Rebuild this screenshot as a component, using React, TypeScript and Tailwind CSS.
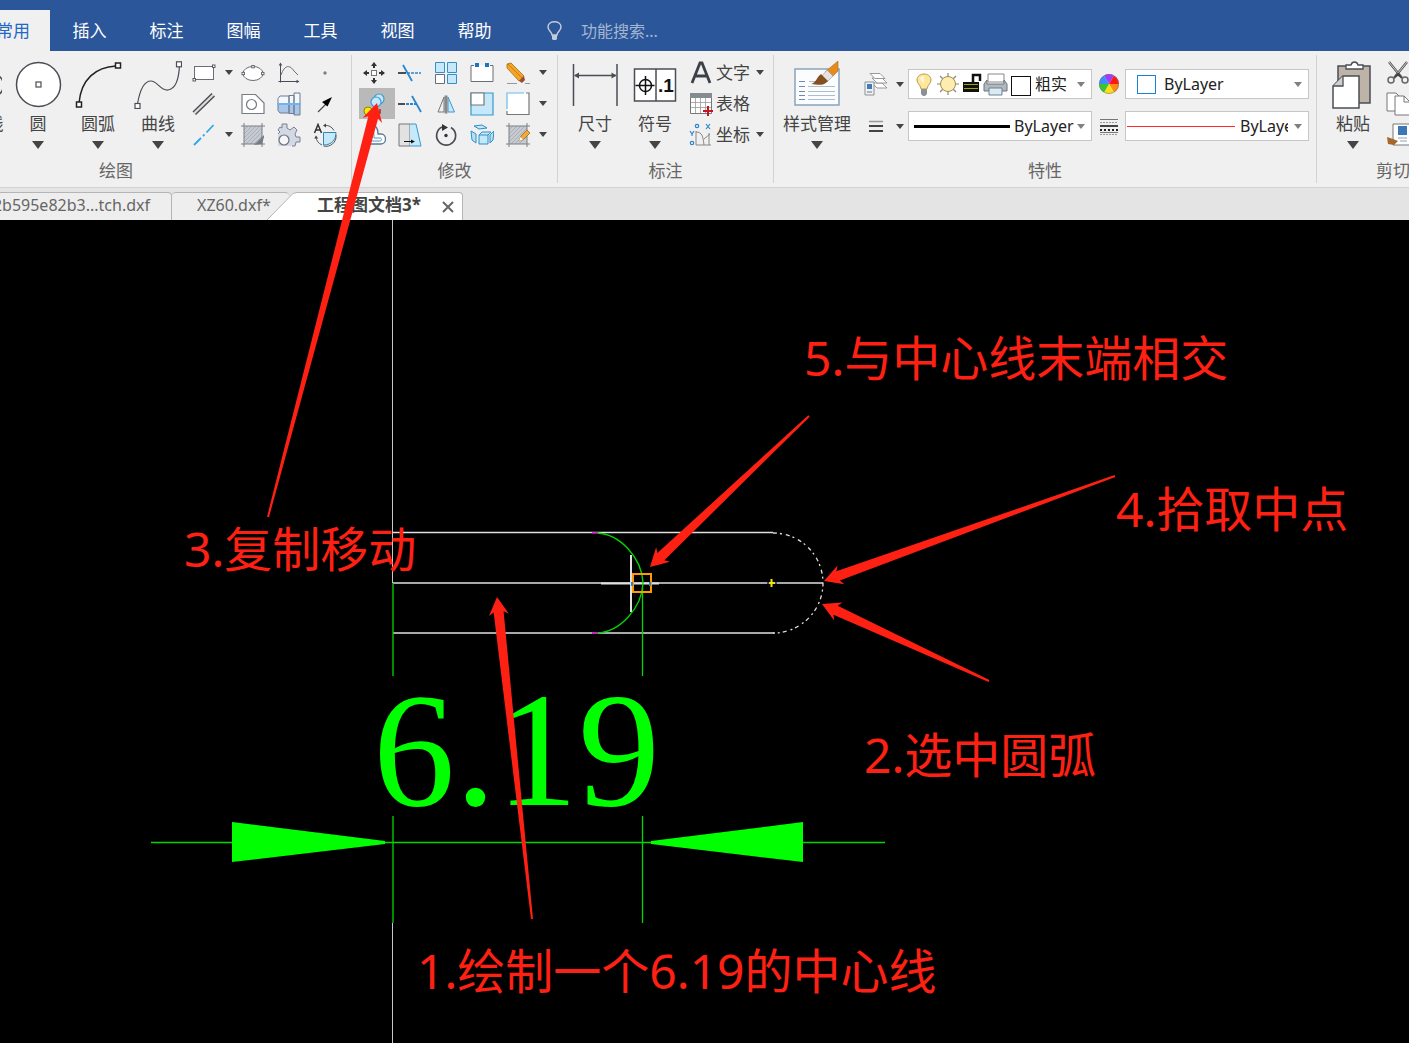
import type { ReactNode } from 'react';

const INK = '#4a4d54';
const BLUE = '#2a86cf';
const PALE = '#c5e8fb';

function Icon({ children, size = 24 }: { children: ReactNode; size?: number }) {
  return (
    <svg width={size} height={size} viewBox={`0 0 ${size} ${size}`} fill="none" className="shrink-0" aria-hidden="true">
      {children}
    </svg>
  );
}

function Caret({ large = false, light = false }: { large?: boolean; light?: boolean }) {
  return (
    <svg
      width={large ? 12 : 8}
      height={large ? 8 : 5}
      viewBox="0 0 12 8"
      preserveAspectRatio="none"
      className="shrink-0"
      aria-hidden="true"
    >
      <path d="M0 0H12L6 8Z" fill={light ? '#808080' : '#444'} />
    </svg>
  );
}

/* ---------- drawing tools ---------- */

const rectangle = (
  <>
    <rect x="2.500" y="5.500" width="19" height="13" fill="#fff" stroke="#6a6d74" />
    <rect x="20.500" y="4" width="2.500" height="2.500" fill="#fff" stroke={INK} strokeWidth=".9" />
    <rect x="1" y="17.500" width="2.500" height="2.500" fill="#fff" stroke={INK} strokeWidth=".9" />
  </>
);
const ellipse = (
  <>
    <ellipse cx="12" cy="12.500" rx="10" ry="7" fill="#fff" stroke="#6a6d74" />
    <g fill="#fff" stroke={INK} strokeWidth=".8">
      <rect x="10.800" y="4.500" width="2.400" height="2.400" />
      <rect x="1" y="11.300" width="2.400" height="2.400" />
      <rect x="20.600" y="11.300" width="2.400" height="2.400" />
    </g>
  </>
);
const plot = (
  <>
    <path d="M3.500 3v18.500M1.500 20.500H21" stroke={INK} />
    <path d="M3.500 1.500l-1.800 3h3.600zM22.500 20.500l-3-1.800v3.600z" fill={INK} />
    <path d="M4 14C8 3 13 4 17 10l4 4" stroke="#6a6d74" />
  </>
);
const point = <circle cx="12" cy="12" r="1.700" fill="#808080" />;
const parallel = (
  <>
    <path d="M2 21.500L21.500 2.500" stroke="#dcdcdc" strokeWidth="3" />
    <path d="M1 20L20 1.500M3.500 22.500L22.500 4" stroke={INK} strokeWidth="1.400" />
  </>
);
const outline = (
  <>
    <path d="M1 2.500h13.500L23 11v10.500H1z" fill="#fff" stroke="#777b82" strokeWidth="1.200" />
    <circle cx="10.500" cy="12.500" r="5" stroke="#777b82" strokeWidth="1.200" />
  </>
);
const shaft = (
  <>
    <path d="M1 6.500L3 4h9v17H3l-2-2.500z" fill="#f4f8fc" />
    <path d="M12 3.500h5v18h-5zM17 1h6v22h-6z" fill="#f4f8fc" />
    <path d="M1 13h11v8H3l-2-2.500zM12 13h5v8.500h-5zM17 13h6v10h-6z" fill="#a9c6e8" />
    <path d="M1 6.500L3 4h9v17H3l-2-2.500zM12 3.500h5v18h-5zM17 1h6v22h-6z" stroke="#6d7d92" />
    <path d="M0 12h24" stroke="#6db4f0" strokeWidth="2" />
  </>
);
const leader = (
  <>
    <path d="M5 20L15 10" stroke={INK} strokeWidth="1.200" />
    <path d="M19 5l-10 5 5.500 4.500z" fill="#000" />
  </>
);
const centerline = (
  <path d="M2 22L9 15m2-2l1.500-1.500M14.500 9.500L21.500 2" stroke="#2fa8e6" strokeWidth="1.800" />
);
const hatch = (
  <>
    <rect x="3" y="3" width="18" height="18" fill="#c6cad1" />
    <path
      d="M3 7l4-4M3 11l8-8M3 15l12-12M3 19l16-16M5 21L21 5M9 21L21 9M13 21l8-8"
      stroke="#a2a8b2"
      strokeWidth=".8"
    />
    <path d="M3 0v24M21 0v24M0 3h24M0 21h24" stroke="#7a7f87" />
  </>
);
const hatchCorner = (
  <>
    {hatch}
    <path d="M13 22L23 12v2l-2 7z" fill="#777c84" />
  </>
);
const gear = (
  <>
    <path
      d="M5 5V1h5v4l3 2 4-3 3 3-2 4 1 3h4v5h-4l-1 4H1V12l2-2-2-3 2-2z"
      fill="#d3d9e4"
    />
    <path
      d="M1 11l2-2-2-2 2-3 2 1V1h5v4l3 2 4-3 3 3-2 4 1 3h4v5h-4l-1 4h-3"
      stroke="#7b818c"
    />
    <circle cx="7" cy="17" r="5" fill="#f6f6f6" stroke="#6b717c" strokeWidth="1.200" />
  </>
);
const region = (
  <>
    <path d="M10.500 9.500H23c0 7-4 12.500-12.500 12.500z" fill={PALE} stroke="#3188b5" />
    <path d="M11 2.500a10 10 0 0 1 10 5M3 14a10 10 0 0 0 6 8M10.500 23a10 10 0 0 0 12.500-11" stroke="#555b63" />
    <path d="M10 2.500l3-2v4zM3 12.500l-1.800 3h4z" fill="#444" />
    <path d="M1.500 10L5 1.500 8.500 10M3 7h4" stroke="#333" strokeWidth="1.500" />
  </>
);

/* ---------- modify tools ---------- */

const move = (
  <>
    <rect x="9.500" y="9.500" width="5" height="5" fill="#fff" stroke="#777" />
    <path d="M12 2v5M12 17v5M2 12h5M17 12h5" stroke="#333" strokeWidth="2" />
    <path d="M12 1L9 5h6zM12 23l-3-4h6zM1 12l4-3v6zM23 12l-4-3v6z" fill="#333" />
  </>
);
const trim = (
  <>
    <path d="M0 12h8" stroke={INK} strokeWidth="2" />
    <path d="M9 12h14" stroke={BLUE} strokeWidth="1.600" strokeDasharray="3 1" />
    <path d="M5 4l9 16" stroke={BLUE} strokeWidth="1.800" />
  </>
);
const arrayTool = (
  <>
    <g fill={PALE} stroke="#3790c4">
      <path d="M1.500 1.500h9v10h-9zM13.500 1.500h9v10h-9zM13.500 13.500h9v9h-9z" />
    </g>
    <path d="M1.500 13.500h9v9h-9z" fill="#fff" stroke="#6a6d74" />
  </>
);
const breakTool = (
  <>
    <path d="M1 4.500h22v16H1z" fill="#fff" />
    <path d="M4 4.500H1v16h22v-16h-3" stroke="#6a6d74" />
    <path d="M5 2h4v4H5zM15 2h4v4h-4z" fill="#1976c2" />
  </>
);
const eraser = (
  <>
    <path d="M1 3l4-1 13 13-5 5L1 7z" fill="#f3a526" stroke="#a96918" strokeWidth=".8" />
    <path d="M2 3l14 14" stroke="#c97c10" />
    <path d="M13 20l5-5 1 4-3 3z" fill="#9c4b35" />
    <path d="M1 22.500h10M19 22.500h5" stroke="#999" />
  </>
);
const copyMove = (
  <>
    <circle cx="17" cy="7" r="5" fill={PALE} stroke="#479bce" strokeWidth="1.200" />
    <circle cx="14" cy="10" r="5" fill={PALE} stroke="#479bce" strokeWidth="1.200" />
    <circle cx="6" cy="19" r="4" fill="#ffeb00" stroke="#8a8a00" />
    <path d="M13 21h5v-4" stroke="#a22" strokeWidth="1.500" />
  </>
);
const extend = (
  <>
    <path d="M0 12h7" stroke={INK} strokeWidth="2" />
    <path d="M8 12h10" stroke={BLUE} strokeWidth="1.800" strokeDasharray="3 1" />
    <path d="M14 4l9 16" stroke={BLUE} strokeWidth="1.800" />
  </>
);
const mirror = (
  <>
    <path d="M10 5v15H4z" fill="#eee" stroke="#777" />
    <path d="M14 5v15h6.500z" fill={PALE} stroke="#3d98cc" />
    <path d="M12 3.500v18" stroke="#888" strokeWidth="3" />
  </>
);
const scale = (
  <>
    <path d="M1 1h22v22H1z" fill={PALE} stroke="#3d98cc" strokeWidth="1.200" />
    <path d="M1 1h13v12H1z" fill="#fff" stroke="#777" strokeWidth="1.200" />
  </>
);
const chamfer = (
  <>
    <path d="M1 1h22v21H1z" fill="#fff" />
    <path d="M20 1h3v21.500H1V19" stroke="#777" strokeWidth="1.200" />
    <path d="M1 17V1h17" stroke="#66bdeb" strokeWidth="1.200" />
  </>
);
const offset = (
  <>
    <path d="M9 2c5 0 7 3 7 9h3c6 0 6 10 0 10H1" fill="#fff" stroke="#5d7893" strokeWidth="1.300" />
    <path d="M10 6c2 1 2 4 2 9h6c2 0 2 3 0 3H6" stroke="#479bce" />
  </>
);
const stretch = (
  <>
    <path d="M1 1h11v22H1z" fill="#e2e2e2" stroke="#777" />
    <path d="M12 1h6l5 22H12z" fill={PALE} />
    <path d="M12 1h6l5 22H12" stroke="#3d98cc" />
    <path d="M6 18.500h9" stroke="#111" />
    <path d="M17 18.500l-4-2v4z" fill="#111" />
  </>
);
const rotate = (
  <>
    <path d="M17 4.500a9.500 9.500 0 1 1-9-.4" stroke={INK} strokeWidth="1.700" />
    <path d="M8 1l6 3.500L8 8z" fill="#333" />
    <circle cx="12" cy="12.500" r="1.700" fill="#333" />
  </>
);
const block = (
  <>
    <path d="M4 3l8-1 5 3-8 1z" fill={PALE} stroke="#2d8fc6" />
    <path d="M1 8l5 3v9l-4-3zM24 8l-4 4v8l3-3z" fill="#b6e0f7" stroke="#2d8fc6" />
    <path d="M9 12h9v9H9zM9 12l3-3h9l-3 3" fill={PALE} stroke="#2d8fc6" />
  </>
);
const hatchEdit = (
  <>
    {hatch}
    <path d="M13 18l2-5 6-6 3 3-6 6z" fill="#f0a93b" stroke="#a4671a" strokeWidth=".8" />
    <path d="M13 18l1.500-4 2.500 2.500z" fill="#fff" />
  </>
);

/* ---------- annotate, clipboard ---------- */

const letterA = <path d="M3 22L11 2h2l8 20M6 15h12" stroke="#3c4048" strokeWidth="2.800" />;
const tableIcon = (
  <>
    <path d="M1.500 1.500h21v20h-21z" fill="#fff" stroke="#777" />
    <path d="M1 1h22v5H1z" fill="#858b91" />
    <path d="M6.500 6v15M11.500 6v15M16.500 6v15M2 10.500h20M2 15.500h20" stroke="#999" strokeWidth=".8" />
    <path d="M19 14v10M14 19h10" stroke="#c4161c" strokeWidth="2" />
  </>
);
const coordIcon = (
  <>
    <path d="M7 8v14h15M7 9c6 0 7 4 8 13M15 16l6-5M20 10v12" stroke="#888" />
    <path d="M1 8l2 3 2-3M3 11v2M17 1l4 5M21 1l-4 5" stroke={BLUE} strokeWidth="1.200" />
    <circle cx="8" cy="3" r="1.700" stroke={BLUE} strokeWidth="1.200" />
    <circle cx="3" cy="20" r="1.700" stroke={BLUE} strokeWidth="1.200" />
  </>
);
const layers = (
  <>
    <g fill="#fff" stroke="#8b9096" strokeWidth=".9">
      <path d="M8 11h10l5 5H13z" />
      <path d="M8 6h10l5 5H13z" />
      <path d="M6 1.500h10l5 5H11z" />
    </g>
    <path d="M1 10h9v13H1z" fill="#eef2f6" stroke="#8b9096" />
    <path d="M3 12h5v5H3z" fill="#3f7cb5" />
    <path d="M3 20h5" stroke="#777" />
  </>
);
const weights = (
  <>
    <path d="M5 7.500h14" stroke="#999" strokeWidth="1.500" />
    <path d="M5 12h14M5 17h14" stroke="#444" strokeWidth="2" />
  </>
);
const lineTypes = (
  <>
    <path d="M3 5.500h18M3 18.500h18" stroke="#777" />
    <path d="M3 8.500h18M3 20.500h18" stroke="#999" strokeDasharray="2 1" />
    <path d="M3 12h18" stroke="#444" strokeWidth="2" />
    <path d="M3 16h18" stroke="#222" strokeWidth="2" strokeDasharray="2 2" />
  </>
);
const wheel = (
  <>
    <path d="M12 12L7 3.500a10 10 0 0 1 10 0z" fill="#a13bff" />
    <path d="M12 12L17 3.500a10 10 0 0 1 5 8.500z" fill="#ff1717" />
    <path d="M12 12h10a10 10 0 0 1-5 8.500z" fill="#ff8a16" />
    <path d="M12 12l5 8.500a10 10 0 0 1-10 0z" fill="#ffde18" />
    <path d="M12 12L7 20.500A10 10 0 0 1 2 12z" fill="#36c72e" />
    <path d="M12 12H2a10 10 0 0 1 5-8.500z" fill="#3a8cff" />
    <circle cx="12" cy="12" r="9.500" stroke="#777" strokeWidth=".6" />
  </>
);
const scissors = (
  <>
    <path d="M3 1l13 16M21 1L8 17" stroke="#555" strokeWidth="2.500" />
    <path d="M3 1l9 11M21 1l-9 11" stroke="#eee" strokeWidth=".8" />
    <path d="M8 17l4-6 4 6-4-2z" fill="#444" />
    <circle cx="5" cy="19" r="3" stroke="#666" strokeWidth="1.500" />
    <circle cx="19" cy="19" r="3" stroke="#666" strokeWidth="1.500" />
  </>
);
const copyPages = (
  <>
    <path d="M1 1h9l4 4v14H1z" fill="#fff" stroke="#777" />
    <path d="M9 4h9l6 6v13H9z" fill="#fff" stroke="#777" />
    <path d="M18 4v6h6" stroke="#777" />
  </>
);
const formatPaint = (
  <>
    <path d="M7 1h17v21H7z" fill="#fff" stroke="#777" />
    <path d="M12 3h9v9h-9z" fill="#3b78b5" />
    <path d="M12 15h9M14 18h7" stroke="#8aa2bd" />
    <path d="M1 14l6 2 5 2-4 4-6-1z" fill="#a5672a" />
  </>
);

const bigCircle = (
  <>
    <circle cx="24.500" cy="23.500" r="22" fill="#fff" stroke={INK} strokeWidth="1.500" />
    <rect x="22" y="21" width="5" height="5" stroke={INK} strokeWidth="1.200" />
  </>
);
const bigArc = (
  <>
    <path d="M5 42C7 18 22 6 42 5" stroke="#222" strokeWidth="1.500" />
    <rect x="2.500" y="41" width="5" height="5" fill="#fff" stroke="#222" strokeWidth="1.500" />
    <rect x="41.500" y="2" width="5" height="5" fill="#fff" stroke="#222" strokeWidth="1.500" />
  </>
);
const bigCurve = (
  <>
    <path d="M3.500 43C6 28 11 20 17 20s10 10 17 9c8-1 11-13 11.500-25" stroke={INK} strokeWidth="1.200" />
    <rect x="1" y="42.500" width="5" height="5" fill="#fff" stroke={INK} strokeWidth="1.200" />
    <rect x="42.500" y=".8" width="5" height="5" fill="#fff" stroke={INK} strokeWidth="1.200" />
  </>
);
const polyline = <path d="M8 42C6 18 34 6 44 14s4 18 0 20" stroke={INK} strokeWidth="1.500" />;
const dimension = (
  <>
    <path d="M2.500 3v42M46 3v42" stroke={INK} strokeWidth="1.500" />
    <path d="M4 14.500h41" stroke={INK} strokeWidth="1.300" />
    <path d="M3 14.500l5-3v6zM45.500 14.500l-5-3v6z" fill={INK} />
  </>
);
const symbol = (
  <>
    <rect x="3.500" y="8" width="41" height="32" fill="#fff" stroke={INK} strokeWidth="1.500" />
    <path d="M25 8v32" stroke={INK} strokeWidth="1.500" />
    <circle cx="14.500" cy="24.500" r="6" stroke="#111" strokeWidth="1.500" />
    <path d="M4.500 24.500h19M14.500 15v19" stroke="#111" strokeWidth="1.500" />
    <text x="27" y="31" fontSize="19" fontWeight="700" fontFamily="Liberation Sans, sans-serif" fill="#111">
      .1
    </text>
  </>
);
const styleManager = (
  <>
    <rect x="2" y="8" width="44" height="36" fill="#fbfcfe" stroke="#89a3bb" strokeWidth="1.500" />
    <path d="M6 20.500h6M6 25.500h6M6 30.500h6M6 34.500h6M6 38.500h6" stroke="#6d8bad" strokeWidth="1.200" />
    <path d="M16 20.500h8M15 25.500h27M15 30.500h27M15 34.500h27M15 38.500h27" stroke="#a9bdd3" strokeWidth="1.200" />
    <path d="M45 0v10l-6 6-7-5z" fill="#e58c1e" stroke="#b06a14" strokeWidth=".6" />
    <path d="M34 9l6 6-6 6-6-5z" fill="#e4e4e4" stroke="#999" strokeWidth=".6" />
    <path d="M28 13l7 7c-4 5-9 4-17 3 5-1 5-6 10-10z" fill="#84501f" />
  </>
);
const paste = (
  <>
    <path d="M9 5h32v37H9z" fill="#bdb3a8" stroke={INK} strokeWidth="1.500" />
    <path d="M17 8V4h5c1-4 6-4 7 0h5v4z" fill="#fff" stroke={INK} strokeWidth="1.300" />
    <path d="M14 15h16v32H4V25z" fill="#fff" stroke={INK} strokeWidth="1.500" />
    <path d="M14 15v10H4" fill="#d0d0d0" stroke={INK} strokeWidth="1.300" />
  </>
);

function BigButton({ label, icon, wide = false }: { label: string; icon: ReactNode; wide?: boolean }) {
  return (
    <button
      type="button"
      className={`flex shrink-0 flex-col items-center whitespace-nowrap pt-1 ${wide ? 'w-[86px]' : 'w-[60px]'}`}
    >
      <Icon size={48}>{icon}</Icon>
      <span className="mt-[3px] mb-[5px] leading-6">{label}</span>
      <Caret large />
    </button>
  );
}

function Tool({ name, icon, active = false }: { name: string; icon: ReactNode; active?: boolean }) {
  return (
    <button
      type="button"
      aria-label={name}
      className={`flex h-[31px] w-9 items-center pl-[3px] ${active ? 'bg-[#b9b9b9]' : ''}`}
    >
      <Icon>{icon}</Icon>
    </button>
  );
}

function More({ name }: { name: string }) {
  return (
    <button type="button" aria-label={name} className="flex h-[31px] w-[13px] items-center">
      <Caret />
    </button>
  );
}

function Group({
  title,
  className,
  inset = '',
  children,
}: {
  title: string;
  className: string;
  inset?: string;
  children: ReactNode;
}) {
  return (
    <section className={`my-1 flex shrink-0 flex-col border-r border-[#d2d2d2] ${className}`}>
      <div className={`flex h-[104px] pt-0.5 ${inset}`}>{children}</div>
      <h2 className="text-center leading-6 text-[#666]">{title}</h2>
    </section>
  );
}

function Combo({ name, value, lead, narrow = false }: { name: string; value: string; lead: ReactNode; narrow?: boolean }) {
  return (
    <label className="flex h-[30px] w-[184px] items-center overflow-hidden border border-[#c6c6c6] bg-white pr-1.5">
      {lead}
      <select
        aria-label={name}
        className={`appearance-none overflow-hidden bg-transparent text-base text-[#222] outline-none ${
          narrow ? 'w-12 flex-none' : 'min-w-0 flex-1'
        }`}
      >
        <option>{value}</option>
      </select>
      <span className="ml-auto flex">
        <Caret light />
      </span>
    </label>
  );
}

const menus = ['插入', '标注', '图幅', '工具', '视图', '帮助'];

function MenuBar() {
  return (
    <header className="flex h-[51px] shrink-0 items-end bg-[#2b579a] text-white">
      <button
        type="button"
        className="flex h-[41px] w-[50px] items-center justify-end bg-[#f0f0f0] pr-5 whitespace-nowrap text-[#2367c4]"
      >
        常用
      </button>
      <nav className="flex pl-px">
        {menus.map((m) => (
          <button key={m} type="button" className="h-[41px] w-[77px]">
            {m}
          </button>
        ))}
      </nav>
      <label className="flex h-[41px] items-center pl-[34px]">
        <svg width="16" height="20" viewBox="0 0 16 20" fill="none" aria-hidden="true">
          <path d="M5 14c0-3-4-4-4-8 0-7 13-7 13 0 0 4-4 5-4 8z" stroke="#c3cbd8" strokeWidth="1.500" />
          <path d="M5 14h5v4l-1 1H6l-1-1z" fill="#c3cbd8" />
        </svg>
        <input
          type="text"
          aria-label="功能搜索"
          placeholder="功能搜索..."
          className="ml-[18px] w-40 bg-transparent text-base outline-none placeholder:text-[#a6b6d0]"
        />
      </label>
    </header>
  );
}

function Ribbon() {
  return (
    <div className="flex h-[137px] shrink-0 overflow-hidden border-b border-[#d2d2d2] bg-[#f0f0f0] text-[#444]">
      <Group title="绘图" className="-ml-[119px] w-[471px]" inset="pl-[67px]">
        <BigButton label="多段线" icon={polyline} />
        <BigButton label="圆" icon={bigCircle} />
        <BigButton label="圆弧" icon={bigArc} />
        <BigButton label="曲线" icon={bigCurve} />
        <div className="ml-px grid h-[93px] grid-cols-[36px_13px_36px_36px_36px]">
          <Tool name="矩形" icon={rectangle} />
          <More name="矩形选项" />
          <Tool name="椭圆" icon={ellipse} />
          <Tool name="公式曲线" icon={plot} />
          <Tool name="点" icon={point} />
          <Tool name="平行线" icon={parallel} />
          <span />
          <Tool name="轮廓" icon={outline} />
          <Tool name="轴" icon={shaft} />
          <Tool name="箭头" icon={leader} />
          <Tool name="中心线" icon={centerline} />
          <More name="中心线选项" />
          <Tool name="剖面线" icon={hatchCorner} />
          <Tool name="齿轮" icon={gear} />
          <Tool name="局部放大" icon={region} />
        </div>
      </Group>

      <Group title="修改" className="w-[206px]" inset="pl-[7px]">
        <div className="grid h-[93px] grid-cols-[36px_36px_36px_36px_36px_13px]">
          <Tool name="平移" icon={move} />
          <Tool name="裁剪" icon={trim} />
          <Tool name="阵列" icon={arrayTool} />
          <Tool name="打断" icon={breakTool} />
          <Tool name="删除" icon={eraser} />
          <More name="删除选项" />
          <Tool name="平移复制" icon={copyMove} active />
          <Tool name="延伸" icon={extend} />
          <Tool name="镜像" icon={mirror} />
          <Tool name="缩放" icon={scale} />
          <Tool name="过渡" icon={chamfer} />
          <More name="过渡选项" />
          <Tool name="等距线" icon={offset} />
          <Tool name="拉伸" icon={stretch} />
          <Tool name="旋转" icon={rotate} />
          <Tool name="分解" icon={block} />
          <Tool name="编辑剖面线" icon={hatchEdit} />
          <More name="编辑剖面线选项" />
        </div>
      </Group>

      <Group title="标注" className="w-[216px]" inset="pl-[7px]">
        <BigButton label="尺寸" icon={dimension} />
        <BigButton label="符号" icon={symbol} />
        <div className="flex flex-col pl-1">
          {[
            { label: '文字', icon: letterA, more: true },
            { label: '表格', icon: tableIcon, more: false },
            { label: '坐标', icon: coordIcon, more: true },
          ].map((r) => (
            <button key={r.label} type="button" className="flex h-[31px] items-center gap-[3px] leading-6">
              <Icon>{r.icon}</Icon>
              <span>{r.label}</span>
              {r.more && (
                <span className="pl-[3px]">
                  <Caret />
                </span>
              )}
            </button>
          ))}
        </div>
      </Group>

      <Group title="特性" className="w-[543px]">
        <BigButton label="样式管理" icon={styleManager} wide />
        <div className="flex flex-col gap-3 pt-3">
          <div className="flex h-[30px] items-center">
            <button type="button" aria-label="图层" className="flex items-center gap-2 px-1">
              <Icon>{layers}</Icon>
              <Caret />
            </button>
            <Combo
              name="图层选择"
              value="粗实"
              lead={
                <svg
                  width="118"
                  height="26"
                  viewBox="0 0 118 26"
                  fill="none"
                  className="mx-1 shrink-0"
                  aria-hidden="true"
                >
                  <path d="M8 18c0-4-4-5-4-9 0-8 14-8 14 0 0 4-4 5-4 9z" fill="#ffe79a" stroke="#b39a55" />
                  <path d="M7 8c0-2 2-3 4-3v8z" fill="#fff8dd" />
                  <path d="M8 18h6v5l-2 2h-2l-2-2z" fill="#8b9197" />
                  <path d="M35 2v22M24 13h22M27 5l16 16M43 5L27 21" stroke="#888" strokeWidth="1.200" />
                  <circle cx="35" cy="13" r="7.500" fill="#ffedb0" stroke="#a58d51" />
                  <path d="M60 12V4h7v6" stroke="#111" strokeWidth="2.500" />
                  <path d="M50 11h16v10H50z" fill="#111" />
                  <path d="M51 13.500h14M51 17.500h14" stroke="#a2a21a" />
                  <path d="M75 3h16v8H75z" fill="#fff" stroke="#888" />
                  <path d="M74 9l-3 4v7h23v-7l-3-4v4H74z" fill="#b1b8c0" stroke="#6d747b" />
                  <path d="M76 17h13v7H76z" fill="#dceaf3" stroke="#6d8191" />
                  <rect x="98.500" y="5.500" width="19" height="19" fill="#fff" stroke="#111" />
                </svg>
              }
            />
            <button type="button" aria-label="颜色" className="flex w-[33px] justify-center">
              <Icon>{wheel}</Icon>
            </button>
            <Combo
              name="颜色选择"
              value="ByLayer"
              lead={<span className="mr-2 ml-[11px] size-[19px] shrink-0 border border-[#1682d9]" />}
            />
          </div>
          <div className="flex h-[30px] items-center">
            <button type="button" aria-label="线宽" className="flex items-center gap-2 px-1">
              <Icon>{weights}</Icon>
              <Caret />
            </button>
            <Combo
              name="线宽选择"
              value="ByLayer"
              lead={<span className="mr-1 ml-[5px] h-[3px] w-24 shrink-0 bg-black" />}
            />
            <button type="button" aria-label="线型" className="flex w-[33px] justify-center">
              <Icon>{lineTypes}</Icon>
            </button>
            <Combo
              name="线型选择"
              value="ByLayer"
              narrow
              lead={<span className="mr-[5px] ml-px h-px w-[108px] shrink-0 bg-[#ff2a2a]" />}
            />
          </div>
        </div>
      </Group>

      <Group title="剪切板" className="w-[170px]" inset="pl-[6px]">
        <BigButton label="粘贴" icon={paste} />
        <div className="flex flex-col">
          <Tool name="剪切" icon={scissors} />
          <Tool name="复制" icon={copyPages} />
          <Tool name="特性匹配" icon={formatPaint} />
        </div>
      </Group>
    </div>
  );
}

function FileTabs() {
  return (
    <div className="flex h-8 shrink-0 items-end bg-[#e4e4e4] text-base leading-6 text-[#666]">
      <button
        type="button"
        className="flex h-7 w-[172px] justify-end rounded-tr border-t border-r border-[#b5b5b5] bg-[#eee] pr-[21px] whitespace-nowrap"
      >
        2b595e82b3...tch.dxf
      </button>
      <button
        type="button"
        className="flex h-7 w-[117px] rounded-t border-t border-[#b5b5b5] bg-[#eee] pl-[25px]"
      >
        XZ60.dxf*
      </button>
      <div className="-ml-[22px] flex h-7 items-center">
        <svg width="30" height="28" viewBox="0 0 30 28" aria-hidden="true">
          <path d="M0 28L26 1.500 30 .5V28z" fill="#fff" />
          <path d="M0 28L26 1.500 30 .5" fill="none" stroke="#b5b5b5" />
        </svg>
        <div className="flex h-7 w-[166px] justify-between rounded-tr border-t border-r border-[#b5b5b5] bg-white pr-2 pl-5">
          <button type="button" className="flex text-[17px] font-bold whitespace-nowrap text-[#444]">
            工程图文档3*
          </button>
          <button type="button" aria-label="关闭">
            <svg width="12" height="12" viewBox="0 0 12 12" aria-hidden="true">
              <path d="M1 1l10 10M11 1L1 11" stroke="#666" strokeWidth="2" />
            </svg>
          </button>
        </div>
      </div>
    </div>
  );
}

/* Tapered pointer from a thin tail (x1, y1) to a barbed head at (x2, y2). */
function pointer(x1: number, y1: number, x2: number, y2: number) {
  const len = Math.hypot(x2 - x1, y2 - y1);
  const ux = (x2 - x1) / len;
  const uy = (y2 - y1) / len;
  const at = (back: number, side: number) => `${x2 - ux * back - uy * side},${y2 - uy * back + ux * side}`;
  return [at(0, 0), at(18, 10), at(15, 5), at(len, 1), at(len, -1), at(15, -5), at(18, -10)].join(' ');
}

const pointers = [
  [268, 517, 377, 103],
  [809, 416, 650, 567],
  [1115, 476, 824, 581],
  [989, 681, 822, 604],
  [532, 919, 497, 597],
];

function Drawing() {
  return (
    <main className="relative flex-1 bg-black">
      <div className="absolute top-[703px] bottom-0 left-[392px] w-px bg-[#c8c8c8]" />
      <svg
        width="1409"
        height="823"
        viewBox="0 220 1409 823"
        fill="none"
        className="absolute top-0 left-0"
        aria-hidden="true"
      >
        <path d="M392.500 220V583" stroke="#c8c8c8" />
        <g stroke="#e0e0e0" strokeWidth="1.300">
          <path d="M393 532.500H773M393 583H823M393 633H775" />
          <path d="M773 533A50 50 0 0 1 773 633" strokeDasharray="4 3 2 4" />
          <path d="M631 555v57M601 583.500h58" strokeWidth="2" />
        </g>
        <g stroke="#00d800" strokeWidth="1.300">
          <path d="M597 533C620 534 642 558 643 583C642 608 620 632 597 633" />
          <path d="M642.500 588V676M642.500 816V923M393 583V676M393 816V923M151 842.500H885" />
        </g>
        <path d="M592 533h6M592 633h6" stroke="#c800c8" strokeWidth="1.500" />
        <path d="M232 822L385 841v3L232 862zM803 822L651 841v3L803 862z" fill="#00ff00" />
        <rect x="633" y="574" width="18" height="18" stroke="#ff9a00" strokeWidth="2" />
        <path d="M632 582v4M650 582v4" stroke="#2f7fe6" strokeWidth="2" />
        <path d="M767 583h10" stroke="#2e3cb0" strokeWidth="2" />
        <path d="M771.500 579v8M769 583h6" stroke="#f0e800" strokeWidth="2" />
      </svg>
      <span className="absolute top-[440px] left-[373px] font-['Liberation_Serif',serif] text-[164px] leading-[180px] text-[#00ff00]">
        6.19
      </span>
    </main>
  );
}

function Callouts() {
  return (
    <div className="pointer-events-none absolute inset-0 overflow-hidden text-[48px] leading-[60px] whitespace-nowrap text-[#ff2014]">
      <span className="absolute top-[328px] left-[804px]">5.与中心线末端相交</span>
      <span className="absolute top-[479px] left-[1116px]">4.拾取中点</span>
      <span className="absolute top-[519px] left-[184px]">3.复制移动</span>
      <span className="absolute top-[725px] left-[864px]">2.选中圆弧</span>
      <span className="absolute top-[941px] left-[417px]">1.绘制一个6.19的中心线</span>
      <svg width="1409" height="1043" viewBox="0 0 1409 1043" className="absolute top-0 left-0" aria-hidden="true">
        {pointers.map(([x1, y1, x2, y2]) => (
          <polygon key={`${x1}-${y1}`} points={pointer(x1, y1, x2, y2)} fill="#ff2014" />
        ))}
      </svg>
    </div>
  );
}

export default function App() {
  return (
    <div className="relative flex min-h-screen flex-col overflow-hidden bg-black font-['Noto_Sans','Noto_Sans_CJK_SC',sans-serif] text-[17px]">
      <MenuBar />
      <Ribbon />
      <FileTabs />
      <Drawing />
      <Callouts />
    </div>
  );
}
